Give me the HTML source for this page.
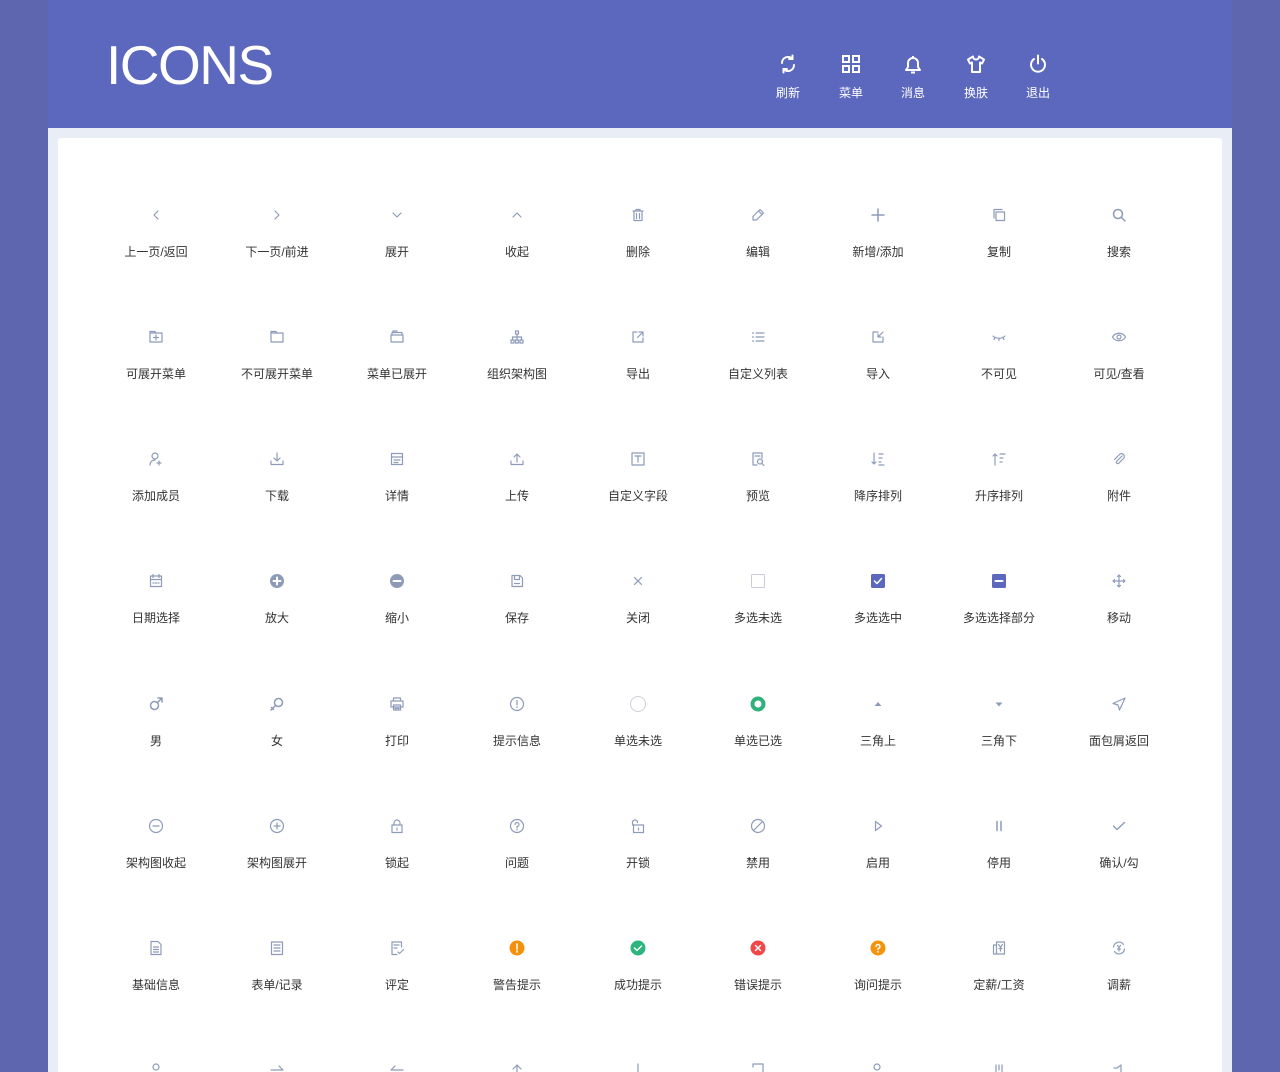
<!DOCTYPE html>
<html style="width:1280px;height:1072px;overflow:hidden"><head><meta charset="utf-8"><style>
*{margin:0;padding:0;box-sizing:border-box}
body{width:1280px;height:1072px;overflow:hidden;background:#5d66ae;font-family:"Liberation Sans","Noto Sans CJK SC",sans-serif;position:relative}
.hd{position:absolute;left:48px;top:0;width:1184px;height:128px;background:#5c68bd}
.title{position:absolute;left:106px;top:34px;color:#fff;font-size:55px;line-height:62px;letter-spacing:-1.5px}
.nav{position:absolute;top:54px;width:60px;text-align:center;color:#fff;font-size:12px}
.nav svg{display:block;margin:0 auto 10px}
.panel{position:absolute;left:48px;top:128px;width:1184px;height:944px;background:#e9edf6}
.card{position:absolute;left:58px;top:138px;width:1164px;height:934px;background:#fff;border-radius:3px 3px 0 0}
.it{position:absolute;width:120px;text-align:center;font-size:12px;color:#333;line-height:16px}
.it svg{display:block;margin:0 auto 21px;width:16px;height:16px;fill:none;stroke:#8d9bb9;stroke-width:1.2;stroke-linecap:round;stroke-linejoin:round}
</style></head><body>
<div class="hd"></div>
<div class="title">ICONS</div>
<div class="nav" style="left:758px"><svg width="20" height="20" viewBox="0 0 20 20" fill="none" stroke="#fff" stroke-width="2" stroke-linecap="round"><path d="M4 9a6 6 0 0 1 10.5-4M16 11a6 6 0 0 1-10.5 4M14.5 1.5v3.5H11M5.5 18.5V15H9"/></svg>刷新</div>
<div class="nav" style="left:821px"><svg width="20" height="20" viewBox="0 0 20 20" fill="none" stroke="#fff" stroke-width="2"><rect x="2" y="2" width="6" height="6"/><rect x="12" y="2" width="6" height="6"/><rect x="2" y="12" width="6" height="6"/><rect x="12" y="12" width="6" height="6"/></svg>菜单</div>
<div class="nav" style="left:883px"><svg width="20" height="20" viewBox="0 0 20 20" fill="none" stroke="#fff" stroke-width="2" stroke-linejoin="round"><path d="M3 16h14l-2-3V9a5 5 0 0 0-10 0v4z M8 18.5h4 M10 2v2"/></svg>消息</div>
<div class="nav" style="left:946px"><svg width="20" height="20" viewBox="0 0 20 20" fill="none" stroke="#fff" stroke-width="2" stroke-linejoin="round"><path d="M7 2.5L2 5.5l2 4 2-1V18h8V8.5l2 1 2-4-5-3a3 3 0 0 1-6 0z"/></svg>换肤</div>
<div class="nav" style="left:1008px"><svg width="20" height="20" viewBox="0 0 20 20" fill="none" stroke="#fff" stroke-width="2" stroke-linecap="round"><path d="M6 5a7 7 0 1 0 8 0M10 1.5v8"/></svg>退出</div>
<div class="panel"></div>
<div class="card"></div>

<div class="it" style="left:96px;top:207px"><svg viewBox="0 0 16 16"><path d="M10 4L6 8l4 4"/></svg>上一页/返回</div>
<div class="it" style="left:217px;top:207px"><svg viewBox="0 0 16 16"><path d="M6 4l4 4-4 4"/></svg>下一页/前进</div>
<div class="it" style="left:337px;top:207px"><svg viewBox="0 0 16 16"><path d="M4 6l4 4 4-4"/></svg>展开</div>
<div class="it" style="left:457px;top:207px"><svg viewBox="0 0 16 16"><path d="M4 10l4-4 4 4"/></svg>收起</div>
<div class="it" style="left:578px;top:207px"><svg viewBox="0 0 16 16"><path d="M3 4h10M6 4V2.5h4V4M4 4v9.5h8V4M6.5 6.5v5M9.5 6.5v5"/></svg>删除</div>
<div class="it" style="left:698px;top:207px"><svg viewBox="0 0 16 16"><path d="M10 2.5l3.5 3.5-7 7H3v-3.5zM8.5 4l3.5 3.5"/></svg>编辑</div>
<div class="it" style="left:818px;top:207px"><svg viewBox="0 0 16 16" style="stroke-width:1.5"><path d="M8 2v12M2 8h12"/></svg>新增/添加</div>
<div class="it" style="left:939px;top:207px"><svg viewBox="0 0 16 16"><rect x="5" y="5" width="8.5" height="8.5"/><path d="M3 11V2.5h8"/></svg>复制</div>
<div class="it" style="left:1059px;top:207px"><svg viewBox="0 0 16 16" style="stroke-width:1.5"><circle cx="7" cy="7" r="4.5"/><path d="M10.5 10.5L14 14"/></svg>搜索</div>

<div class="it" style="left:96px;top:329px"><svg viewBox="0 0 16 16"><path d="M2 4h12v9H2zM2 4V2.5h5l1 1.5M8 6v5M5.5 8.5h5"/></svg>可展开菜单</div>
<div class="it" style="left:217px;top:329px"><svg viewBox="0 0 16 16"><path d="M2 4h12v9H2zM2 4V2.5h5l1 1.5"/></svg>不可展开菜单</div>
<div class="it" style="left:337px;top:329px"><svg viewBox="0 0 16 16"><path d="M2 6h12v7H2zM3 6V3.5h10V6M4 3.5V2h4"/></svg>菜单已展开</div>
<div class="it" style="left:457px;top:329px"><svg viewBox="0 0 16 16"><rect x="6.5" y="2" width="3" height="3"/><rect x="2" y="11" width="3" height="3"/><rect x="6.5" y="11" width="3" height="3"/><rect x="11" y="11" width="3" height="3"/><path d="M8 5v6M3.5 11V8h9v3"/></svg>组织架构图</div>
<div class="it" style="left:578px;top:329px"><svg viewBox="0 0 16 16"><path d="M7 3H3v10h10V9M9 3h4v4M13 3L7.5 8.5"/></svg>导出</div>
<div class="it" style="left:698px;top:329px"><svg viewBox="0 0 16 16"><path d="M2.5 4h1M2.5 8h1M2.5 12h1M6 4h8M6 8h8M6 12h8"/></svg>自定义列表</div>
<div class="it" style="left:818px;top:329px"><svg viewBox="0 0 16 16"><path d="M8 3H3v10h10V8M13 3L8 8M8 5v3h3"/></svg>导入</div>
<div class="it" style="left:939px;top:329px"><svg viewBox="0 0 16 16"><path d="M2 7c3 3 9 3 12 0M4 8.5l-1 2M8 9.5v2M12 8.5l1 2"/></svg>不可见</div>
<div class="it" style="left:1059px;top:329px"><svg viewBox="0 0 16 16"><path d="M1.5 8c3-5 10-5 13 0-3 5-10 5-13 0z"/><circle cx="8" cy="8" r="2"/></svg>可见/查看</div>

<div class="it" style="left:96px;top:451px"><svg viewBox="0 0 16 16"><circle cx="7" cy="5" r="3"/><path d="M2 14c0-3 2-5 5-5M11 10v4M9 12h4"/></svg>添加成员</div>
<div class="it" style="left:217px;top:451px"><svg viewBox="0 0 16 16"><path d="M2 10v3.5h12V10M8 2v8M5 7l3 3 3-3"/></svg>下载</div>
<div class="it" style="left:337px;top:451px"><svg viewBox="0 0 16 16"><rect x="2.5" y="2.5" width="11" height="11"/><path d="M2.5 6h11M5 9h6M5 11.5h4"/></svg>详情</div>
<div class="it" style="left:457px;top:451px"><svg viewBox="0 0 16 16"><path d="M2 10v3.5h12V10M8 11V3M5 6l3-3 3 3"/></svg>上传</div>
<div class="it" style="left:578px;top:451px"><svg viewBox="0 0 16 16"><rect x="2" y="2" width="12" height="12"/><path d="M5 5h6M8 5v6"/></svg>自定义字段</div>
<div class="it" style="left:698px;top:451px"><svg viewBox="0 0 16 16"><path d="M7 14H3V2h9v5M5 5h5"/><circle cx="10" cy="10.5" r="2.5"/><path d="M12 12.5l2 2"/></svg>预览</div>
<div class="it" style="left:818px;top:451px"><svg viewBox="0 0 16 16"><path d="M4 2v11M2 11l2 2 2-2M9 3h4M9 7h3M9 11h2M9 14h5"/></svg>降序排列</div>
<div class="it" style="left:939px;top:451px"><svg viewBox="0 0 16 16"><path d="M4 14V3M2 5l2-2 2 2M9 3h5M9 7h3M9 11h2"/></svg>升序排列</div>
<div class="it" style="left:1059px;top:451px"><svg viewBox="0 0 16 16"><path d="M11 5L5.5 10.5a1.5 1.5 0 0 0 2 2L13 7a3 3 0 0 0-4-4L3.5 8.5"/></svg>附件</div>

<div class="it" style="left:96px;top:573px"><svg viewBox="0 0 16 16"><rect x="2.5" y="3" width="11" height="10.5"/><path d="M2.5 6.5h11M5 1.5v3M11 1.5v3M5 10h1M7.5 10h1M10 10h1"/></svg>日期选择</div>
<div class="it" style="left:217px;top:573px"><svg viewBox="0 0 16 16" style="stroke:none"><circle cx="8" cy="8" r="7" fill="#8d9bb9"/><path d="M8 4.5v7M4.5 8h7" stroke="#fff" stroke-width="2"/></svg>放大</div>
<div class="it" style="left:337px;top:573px"><svg viewBox="0 0 16 16" style="stroke:none"><circle cx="8" cy="8" r="7" fill="#8d9bb9"/><path d="M4.5 8h7" stroke="#fff" stroke-width="2"/></svg>缩小</div>
<div class="it" style="left:457px;top:573px"><svg viewBox="0 0 16 16"><path d="M3 2.5h8l2.5 2.5v8.5H3zM5.5 2.5v4h5v-4M5.5 10.5h5"/></svg>保存</div>
<div class="it" style="left:578px;top:573px"><svg viewBox="0 0 16 16"><path d="M4.5 4.5l7 7M11.5 4.5l-7 7"/></svg>关闭</div>
<div class="it" style="left:698px;top:573px"><svg viewBox="0 0 16 16" style="stroke:#c8ccd6;stroke-width:1"><rect x="1.5" y="1.5" width="13" height="13" rx="1"/></svg>多选未选</div>
<div class="it" style="left:818px;top:573px"><svg viewBox="0 0 16 16" style="stroke:none"><rect x="1" y="1" width="14" height="14" rx="1.5" fill="#5c68bd"/><path d="M4.5 8l2.5 2.5 4.5-5" stroke="#fff" stroke-width="1.5" fill="none"/></svg>多选选中</div>
<div class="it" style="left:939px;top:573px"><svg viewBox="0 0 16 16" style="stroke:none"><rect x="1" y="1" width="14" height="14" rx="1.5" fill="#5c68bd"/><path d="M4.5 8h7" stroke="#fff" stroke-width="2"/></svg>多选选择部分</div>
<div class="it" style="left:1059px;top:573px"><svg viewBox="0 0 16 16"><path d="M8 2v12M2 8h12M6.5 3.5L8 2l1.5 1.5M6.5 12.5L8 14l1.5-1.5M3.5 6.5L2 8l1.5 1.5M12.5 6.5L14 8l-1.5 1.5"/></svg>移动</div>

<div class="it" style="left:96px;top:696px"><svg viewBox="0 0 16 16" style="stroke-width:1.5"><circle cx="6.5" cy="9.5" r="4"/><path d="M9.5 6.5L14 2M10 2h4v4"/></svg>男</div>
<div class="it" style="left:217px;top:696px"><svg viewBox="0 0 16 16" style="stroke-width:1.5"><circle cx="9.5" cy="6.5" r="4"/><path d="M6.5 9.5L2 14M2.5 11.5l2 2"/></svg>女</div>
<div class="it" style="left:337px;top:696px"><svg viewBox="0 0 16 16"><path d="M4.5 5V2h7v3M2 5h12v6H2zM4.5 9h7v5h-7zM6 11h4M6 12.5h4"/></svg>打印</div>
<div class="it" style="left:457px;top:696px"><svg viewBox="0 0 16 16"><circle cx="8" cy="8" r="6.5"/><path d="M8 4.5v4.5M8 11v.5"/></svg>提示信息</div>
<div class="it" style="left:578px;top:696px"><svg viewBox="0 0 16 16" style="stroke:#cdd1da;stroke-width:1"><circle cx="8" cy="8" r="7.5"/></svg>单选未选</div>
<div class="it" style="left:698px;top:696px"><svg viewBox="0 0 16 16" style="stroke:#2fb27a;stroke-width:4"><circle cx="8" cy="8" r="5.5"/></svg>单选已选</div>
<div class="it" style="left:818px;top:696px"><svg viewBox="0 0 16 16" style="stroke:none;fill:#8d9bb9"><path d="M4.5 10L8 6l3.5 4z"/></svg>三角上</div>
<div class="it" style="left:939px;top:696px"><svg viewBox="0 0 16 16" style="stroke:none;fill:#8d9bb9"><path d="M4.5 6.5L8 10.5l3.5-4z"/></svg>三角下</div>
<div class="it" style="left:1059px;top:696px"><svg viewBox="0 0 16 16"><path d="M14 2L2 7.5l5 1.5 1.5 5z"/></svg>面包屑返回</div>

<div class="it" style="left:96px;top:818px"><svg viewBox="0 0 16 16"><circle cx="8" cy="8" r="6.5"/><path d="M5 8h6"/></svg>架构图收起</div>
<div class="it" style="left:217px;top:818px"><svg viewBox="0 0 16 16"><circle cx="8" cy="8" r="6.5"/><path d="M5 8h6M8 5v6"/></svg>架构图展开</div>
<div class="it" style="left:337px;top:818px"><svg viewBox="0 0 16 16"><rect x="3" y="7" width="10" height="7.5"/><path d="M5 7V5a3 3 0 0 1 6 0v2M8 10v2"/></svg>锁起</div>
<div class="it" style="left:457px;top:818px"><svg viewBox="0 0 16 16"><circle cx="8" cy="8" r="6.5"/><path d="M6 6.5a2 2 0 1 1 2 2v1.5M8 11.5v.5"/></svg>问题</div>
<div class="it" style="left:578px;top:818px"><svg viewBox="0 0 16 16"><rect x="3.5" y="7" width="10" height="7.5"/><path d="M2.5 7V4.5a2.5 2.5 0 0 1 5 0M8.5 10v2"/></svg>开锁</div>
<div class="it" style="left:698px;top:818px"><svg viewBox="0 0 16 16"><circle cx="8" cy="8" r="6.5"/><path d="M4 12l8-8"/></svg>禁用</div>
<div class="it" style="left:818px;top:818px"><svg viewBox="0 0 16 16"><path d="M5.5 3.5v9l6-4.5z"/></svg>启用</div>
<div class="it" style="left:939px;top:818px"><svg viewBox="0 0 16 16" style="stroke-width:1.5"><path d="M6 3.5v9M10 3.5v9"/></svg>停用</div>
<div class="it" style="left:1059px;top:818px"><svg viewBox="0 0 16 16" style="stroke-width:1.4"><path d="M2.5 8l3.5 3.5 7.5-7"/></svg>确认/勾</div>

<div class="it" style="left:96px;top:940px"><svg viewBox="0 0 16 16"><path d="M3 1.5h7l3 3v10H3zM5.5 7h5M5.5 9.5h5M5.5 12h5"/></svg>基础信息</div>
<div class="it" style="left:217px;top:940px"><svg viewBox="0 0 16 16"><rect x="2.5" y="2" width="11" height="12.5"/><path d="M5 5h6M5 8h6M5 11h6"/></svg>表单/记录</div>
<div class="it" style="left:337px;top:940px"><svg viewBox="0 0 16 16"><path d="M12.5 7V2H3v12.5h5M5 5h5M5 8h3M9 12l1.5 1.5 4-4"/></svg>评定</div>
<div class="it" style="left:457px;top:940px"><svg viewBox="0 0 16 16" style="stroke:none"><circle cx="8" cy="8" r="7.5" fill="#f5900a"/><path d="M8 4v5M8 11v1" stroke="#fff" stroke-width="1.6"/></svg>警告提示</div>
<div class="it" style="left:578px;top:940px"><svg viewBox="0 0 16 16" style="stroke:none"><circle cx="8" cy="8" r="7.5" fill="#2db57d"/><path d="M4.5 8l2.5 2.5 4.5-4.5" stroke="#fff" stroke-width="1.4" fill="none"/></svg>成功提示</div>
<div class="it" style="left:698px;top:940px"><svg viewBox="0 0 16 16" style="stroke:none"><circle cx="8" cy="8" r="7.5" fill="#f04848"/><path d="M5.5 5.5l5 5M10.5 5.5l-5 5" stroke="#fff" stroke-width="1.4"/></svg>错误提示</div>
<div class="it" style="left:818px;top:940px"><svg viewBox="0 0 16 16" style="stroke:none"><circle cx="8" cy="8" r="7.5" fill="#f5940c"/><path d="M6 6.5a2 2 0 1 1 2 2v1M8 11.5v.5" stroke="#fff" stroke-width="1.4" fill="none"/></svg>询问提示</div>
<div class="it" style="left:939px;top:940px"><svg viewBox="0 0 16 16"><path d="M5.5 2h8v12h-8zM5.5 5h-3v9h3M7.5 4.5l2 2.5 2-2.5M9.5 7v4M8 8.5h3"/></svg>定薪/工资</div>
<div class="it" style="left:1059px;top:940px"><svg viewBox="0 0 16 16"><path d="M2.5 7a5.5 5.5 0 0 1 10-2.5M13.5 9a5.5 5.5 0 0 1-10 2.5M6.5 5.5L8 7.5l1.5-2M8 7.5v3.5M6.5 9h3"/></svg>调薪</div>

<div class="it" style="left:96px;top:1062px;height:10px;overflow:hidden"><svg viewBox="0 0 16 16"><circle cx="8" cy="5" r="3"/></svg></div>
<div class="it" style="left:217px;top:1062px;height:10px;overflow:hidden"><svg viewBox="0 0 16 16"><path d="M2 8h12M10 4l4 4"/></svg></div>
<div class="it" style="left:337px;top:1062px;height:10px;overflow:hidden"><svg viewBox="0 0 16 16"><path d="M14 8H2M6 4L2 8"/></svg></div>
<div class="it" style="left:457px;top:1062px;height:10px;overflow:hidden"><svg viewBox="0 0 16 16"><path d="M8 14V3M4 7l4-4 4 4"/></svg></div>
<div class="it" style="left:578px;top:1062px;height:10px;overflow:hidden"><svg viewBox="0 0 16 16"><path d="M8 2v12"/></svg></div>
<div class="it" style="left:698px;top:1062px;height:10px;overflow:hidden"><svg viewBox="0 0 16 16"><path d="M3 5V2h10v10"/></svg></div>
<div class="it" style="left:818px;top:1062px;height:10px;overflow:hidden"><svg viewBox="0 0 16 16"><circle cx="7" cy="5" r="3"/></svg></div>
<div class="it" style="left:939px;top:1062px;height:10px;overflow:hidden"><svg viewBox="0 0 16 16"><path d="M5 3v10M11 3v10M8 3v5"/></svg></div>
<div class="it" style="left:1059px;top:1062px;height:10px;overflow:hidden"><svg viewBox="0 0 16 16"><path d="M3 6h3l4-3v10"/></svg></div>
</body></html>
